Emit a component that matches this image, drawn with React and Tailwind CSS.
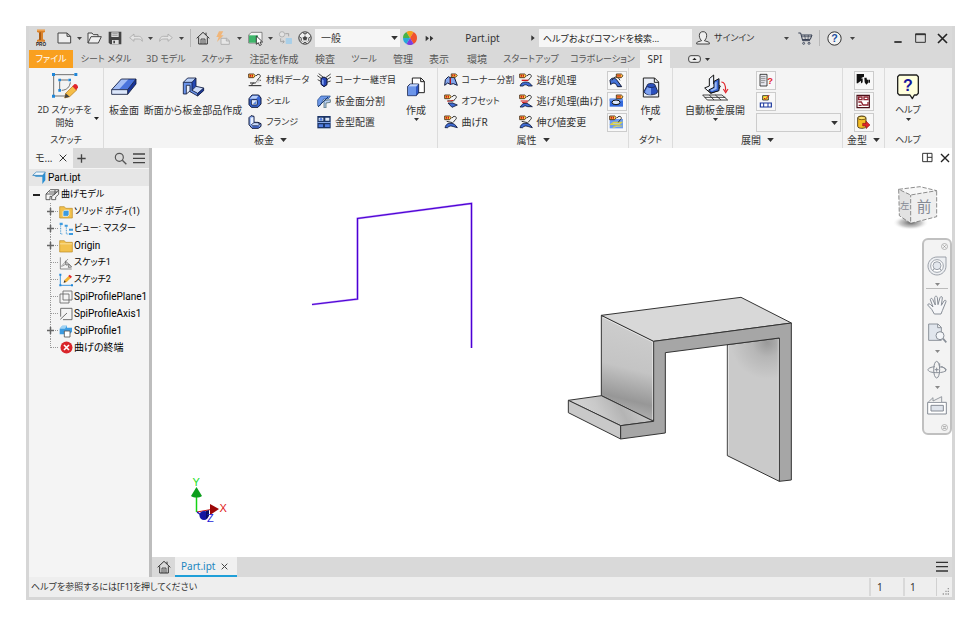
import React from "react";

const UI = "font-['Noto_Sans','Noto_Sans_CJK_JP',sans-serif]";

/* Katakana labels are set one size smaller than kanji and Latin ones. */
const sizeOf = (label) => (/[ァ-ヶ]/.test(label) ? "text-[9px]" : "text-[10px]");

/* Icons are drawn on a grid of three units per pixel. */
function Pic({ w, h, children, className = "" }) {
  return (
    <svg width={w} height={h} viewBox={`0 0 ${w * 3} ${h * 3}`} fill="none" className={`shrink-0 ${className}`} aria-hidden="true">
      {children}
    </svg>
  );
}

function Caret({ big = false, color = "#333" }) {
  return (
    <svg width={big ? 7 : 5} height={big ? 4 : 3} viewBox="0 0 10 6" aria-hidden="true" className="shrink-0">
      <path d="M0 0h10L5 6z" fill={color} />
    </svg>
  );
}

/* ---------- title bar icons ---------- */
const Logo = () => (
  <Pic w={14} h={18}>
    <path d="M9 2h24v7l-6 2v20l6 2v5H9v-5l6-2V11L9 9z" fill="#d9822b" />
    <path d="M15 11l6-2v24h-6z" fill="#a65a14" />
    <path d="M9 2h24v4H9z" fill="#f0a04b" />
    <text x="21" y="52" fontSize="14" fontWeight="700" textAnchor="middle" fill="#222" fontFamily="Liberation Sans">PRO</text>
  </Pic>
);
const NewFile = ({ c = "#444" }) => (
  <Pic w={15} h={12}>
    <path d="M3 3h27l11 10v20H3z M30 3v10h11" stroke={c} strokeWidth="3" fill="#eee" />
  </Pic>
);
const OpenFile = () => (
  <Pic w={15} h={12}>
    <path d="M3 33V3h12l4 5h14v6 M3 33l9-19h31l-9 19z" stroke="#444" strokeWidth="3" fill="#eee" strokeLinejoin="round" />
  </Pic>
);
const Save = () => (
  <Pic w={14} h={14}>
    <path d="M2 2h38v38H7l-5-5z" fill="#444" />
    <path d="M10 4h22v14H10z" fill="#ddd" />
    <path d="M13 8h16M13 13h16" stroke="#777" strokeWidth="2" />
    <path d="M12 27h20v12H12z" fill="#ddd" />
    <path d="M16 29h5v8h-5z" fill="#444" />
  </Pic>
);
const Undo = ({ flip = false }) => (
  <Pic w={14} h={10} className={flip ? "-scale-x-100" : ""}>
    <path d="M2 14L15 3v7h14c6 0 11 4 11 15-4-6-7-7-12-7H15v7z" stroke="#aaa" strokeWidth="2.5" fill="#e4e4e4" strokeLinejoin="round" />
  </Pic>
);
const Home = () => (
  <Pic w={14} h={14}>
    <path d="M2 22L21 4l19 18M8 19v20h26V19M30 5v7" stroke="#333" strokeWidth="3" />
    <path d="M15 39V24h12v15M21 26v12" stroke="#333" strokeWidth="2.5" />
  </Pic>
);
const Flash = () => (
  <Pic w={16} h={14}>
    <path d="M12 1h13l-7 12h8L6 33l5-15H4z" fill="#f0b67a" />
    <path d="M18 22h17l8 7v11H18z M34 22v8h9" stroke="#aaa" strokeWidth="2.5" fill="#e6e6e6" />
  </Pic>
);
const GreenBox = () => (
  <Pic w={15} h={15}>
    <path d="M2 12l8-8h32v24l-8 8H2z" fill="#f4f4f4" stroke="#555" strokeWidth="2" />
    <path d="M3 13h27v22H3z" fill="#3eb56a" />
    <path d="M25 15v25l6-5 4 9 5-3-4-8h8z" fill="#fff" stroke="#222" strokeWidth="2.5" />
  </Pic>
);
const LinkBoxes = () => (
  <Pic w={15} h={14}>
    <circle cx="12" cy="10" r="8" stroke="#aaa" strokeWidth="2.5" fill="#e2e2e2" />
    <path d="M22 8h10v8M8 22v10h10M14 28l5 4-5 5" stroke="#999" strokeWidth="2.5" />
    <rect x="23" y="21" width="19" height="18" rx="2" fill="#a9cfe8" />
  </Pic>
);
const Ball = () => (
  <Pic w={14} h={14}>
    <circle cx="21" cy="21" r="18.5" fill="#eee" stroke="#333" strokeWidth="3" />
    <path d="M21 15l7 5-3 8h-8l-3-8z" fill="#444" />
    <path d="M14 5l7 4 7-4M5 17l5 6-1 8M37 17l-5 6 1 8M15 38l6-5 6 5" stroke="#444" strokeWidth="3" />
    <path d="M21 14V9M29 20l4 2M26 29l3 4M16 29l-3 4M13 20l-4 2" stroke="#777" strokeWidth="2" />
  </Pic>
);
const Wheel = () => (
  <Pic w={14} h={14}>
    <path d="M21 21L10 3A21 21 0 0 1 32 3z" fill="#f6a01a" />
    <path d="M21 21L32 3a21 21 0 0 1 10 18z" fill="#f0522d" />
    <path d="M21 21h21a21 21 0 0 1-10 18z" fill="#f0522d" />
    <path d="M21 21l11 18a21 21 0 0 1-22 0z" fill="#7a3fe0" />
    <path d="M21 21L10 39A21 21 0 0 1 0 21z" fill="#28a9d9" />
    <path d="M21 21H0A21 21 0 0 1 10 3z" fill="#48b348" />
  </Pic>
);
const User = () => (
  <Pic w={14} h={14}>
    <path d="M21 2c8 0 11 5 11 12s-4 13-7 15l13 4c2 1 2 4 2 6H2c0-2 0-5 2-6l13-4c-3-2-7-8-7-15S13 2 21 2z" stroke="#444" strokeWidth="3" fill="#eee" />
  </Pic>
);
const Cart = () => (
  <Pic w={15} h={13}>
    <path d="M1 3h7l6 23h22M10 9h32l-5 13-24 1" stroke="#333c50" strokeWidth="3" />
    <path d="M12 14h28M20 9l2 13M31 9l-1 13" stroke="#333c50" strokeWidth="2" />
    <circle cx="17" cy="34" r="3" stroke="#333c50" strokeWidth="2.5" />
    <circle cx="33" cy="34" r="3" stroke="#333c50" strokeWidth="2.5" />
  </Pic>
);
const HelpCircle = () => (
  <Pic w={15} h={15}>
    <circle cx="22.5" cy="22.5" r="20" stroke="#333" strokeWidth="3" fill="#f4f4f4" />
    <text x="22.5" y="34" fontSize="32" fontWeight="700" textAnchor="middle" fill="#1d4f9e" fontFamily="Liberation Sans">?</text>
  </Pic>
);

/* ---------- ribbon icons ---------- */
const SketchStart = () => (
  <Pic w={27} h={27}>
    <path d="M10 8h60M8 12v58M10 72h34" stroke="#555" strokeWidth="2.5" />
    <path d="M29 24h22M26 28v26M32 55c16-1 24-10 26-24" stroke="#555" strokeWidth="2.5" />
    <g fill="#1f86d8">
      <path d="M3 3h9v9H3zM70 3h9v9h-9zM3 68h9v9H3zM22 20h8v8h-8zM52 20h8v8h-8zM22 51h8v8h-8z" />
    </g>
    <path d="M44 64L66 42l12 11-22 21-15 4z" fill="#f5bd48" stroke="#b8791a" strokeWidth="2" />
    <path d="M41 78l3-14 12 10z" fill="#444" />
    <path d="M64 43l7-7c5-1 11 5 10 11l-6 7z" fill="#e0262c" />
  </Pic>
);
const Slab = () => (
  <Pic w={28} h={20}>
    <path d="M5 38L34 6h44L53 38z" fill="#4a74dd" />
    <path d="M5 38L34 6h22L26 38z" fill="#a3bdf5" />
    <path d="M5 38h48v14H5z" fill="#dce7fb" />
    <path d="M53 38L78 6v15L53 52z" fill="#17349b" />
    <path d="M5 38L34 6h44v15L53 52H5zM5 38h48v14M53 38L78 6" stroke="#111a3c" strokeWidth="2.5" />
  </Pic>
);
const Profile = () => (
  <Pic w={23} h={20}>
    <path d="M4 16L17 3h25v25l23 5v8L47 57 24 44V25H13v26H4z" fill="#6b94ea" />
    <path d="M4 16L17 3h25L30 16z" fill="#b9d0f8" />
    <path d="M30 16L42 3v25L30 40z" fill="#2347b4" />
    <path d="M30 40l12-12 23 5-18 16z" fill="#cddcfb" />
    <path d="M47 49l18-16v8L47 57z" fill="#1e3a9a" />
    <path d="M13 25h11v17l-11 9z" fill="#e8effd" />
    <path d="M4 16L17 3h25v25l23 5v8L47 57 24 44V25H13v26H4zM4 16h26v24l17 9v8M30 16L42 3M30 40l12-12M47 49l18-16M13 51l11-9" stroke="#111a3c" strokeWidth="2.5" strokeLinejoin="round" />
  </Pic>
);
const CreatePart = () => (
  <Pic w={18} h={20}>
    <path d="M16 3h26l10 10v34H16z M41 3v11h11" fill="#fff" stroke="#222" strokeWidth="3" />
    <path d="M2 28l7-7h26v26l-7 9H2z" fill="#2f57c4" stroke="#111a3c" strokeWidth="2.5" />
    <path d="M3 29l7-7h24l-7 7z" fill="#c4d7fa" />
    <path d="M3 29h24v26H3z" fill="#6c95e9" />
  </Pic>
);
const DuctPart = () => (
  <Pic w={18} h={21}>
    <path d="M4 3h34l12 12v45H4z M37 3v13h13" fill="#e9edf5" stroke="#222" strokeWidth="3" />
    <path d="M15 26c0-9 25-9 25 0l7 17c0 14-41 14-41 0z" fill="#2b50bd" stroke="#111a3c" strokeWidth="2.5" />
    <path d="M16 31L9 44c1 8 13 9 18 9V33z" fill="#7da0ee" />
    <path d="M16 27c3 6 20 6 24 0" stroke="#111a3c" strokeWidth="2" />
  </Pic>
);
const Unfold = () => (
  <Pic w={27} h={27}>
    <path d="M22 14L35 3v27l20 6-7 14-22 8L8 42l14-6z" fill="#eef3fc" stroke="#111" strokeWidth="3" strokeLinejoin="round" />
    <path d="M36 22l15-8v36L27 57l-7-9 16-8z" fill="#3a68d6" stroke="#111" strokeWidth="3" />
    <path d="M38 26l6-3v22l-14 6-5-3 13-6z" fill="#9dbbf5" />
    <path d="M2 63h58l17 15H16zM22 63l14 15M40 63l17 15M8 70h62" fill="#fff" stroke="#222" strokeWidth="2.5" />
    <path d="M58 24c9 0 13 6 13 26M64 45l7 11 7-11" stroke="#e0262c" strokeWidth="3.500" />
  </Pic>
);
const HelpNote = () => (
  <Pic w={22} h={26}>
    <path d="M7 3h52l5 5v50l-5 5H52l-6 11-7-11H7l-5-5V8z" fill="#ffffdd" stroke="#222" strokeWidth="4" strokeLinejoin="round" />
    <text x="33" y="50" fontSize="48" fontWeight="700" textAnchor="middle" fill="#16169b" fontFamily="Liberation Sans">?</text>
  </Pic>
);

const Tag = ({ x = 0 }) => (
  <g>
    <path d={`M${x + 2} 3h15l5 5-5 6H${x + 2}z`} fill="#ffcf4a" stroke="#40200c" strokeWidth="2.5" />
    <path d={`M${x + 5} 8h10`} stroke="#d01818" strokeWidth="6" strokeDasharray="4 2" />
  </g>
);
const Hook = () => <path d="M24 9c4-8 14-5 13 1-1 5-7 6-9 12" stroke="#333" strokeWidth="3" />;

const Material = () => (
  <Pic w={14} h={14}><Tag /><Hook /><path d="M2 38h38M6 30h17l7-8h9M10 36l7-6" stroke="#222" strokeWidth="3" /><path d="M23 30l7-8h8l-6 8z" fill="#ddd" /></Pic>
);
const Shell = () => (
  <Pic w={14} h={14}>
    <path d="M3 14L12 3h20l7 9v18l-9 10H10l-7-8z" fill="#3a66d2" stroke="#111a3c" strokeWidth="3" />
    <path d="M5 14l8-9h18l-6 9z" fill="#b9cff8" />
    <rect x="10" y="17" width="18" height="16" rx="3" fill="#dce7fb" stroke="#111a3c" strokeWidth="2.5" />
    <path d="M15 30h10V20z" fill="#5b86e0" />
  </Pic>
);
const Flange = () => (
  <Pic w={14} h={14}>
    <path d="M3 8l6-6 9 2v18h12l9 4v8l-8 6H12L3 29z" fill="#88aaf0" stroke="#111a3c" strokeWidth="3" />
    <path d="M8 9l8-3v17l-6 6-2-3z" fill="#eaf1ff" /><path d="M13 34h20v4H13z" fill="#2347af" /><path d="M10 29l8-6h10l8 4-7 5H14z" fill="#c9dafa" stroke="#111a3c" strokeWidth="2" />
  </Pic>
);
const Seam = () => (
  <Pic w={14} h={14}>
    <path d="M1 8l13 9M5 2l13 10M41 3L26 14M42 12L28 21M2 20l11 6M41 24l-12 4" stroke="#222" strokeWidth="2.500" />
    <path d="M12 16l9-4 9 5v18l-9 6-9-7z" fill="#2746b8" stroke="#0b102c" strokeWidth="3" />
    <path d="M15 19l5 3v14l-5-4z" fill="#86a6f0" />
  </Pic>
);
const FaceSplit = () => (
  <Pic w={14} h={13}>
    <path d="M2 15L12 3h28l-6 9H20L9 32H2z" fill="#6d98e8" stroke="#1b4384" strokeWidth="2" />
    <path d="M21 17l19-3v8l-13 2v15h-6z" fill="#b9d0f5" stroke="#355" strokeWidth="2" />
    <path d="M3 36l30-30" stroke="#16386e" strokeWidth="3" />
  </Pic>
);
const DieLayout = () => (
  <Pic w={14} h={14}>
    <path d="M1 3h40v37H1z" fill="#1b3467" />
    <path d="M5 8h14v9H5zM25 8h12v9H25z" fill="#dfe9f7" /><path d="M1 21h40v3H1z" fill="#89a9e8" />
    <path d="M5 28h13v8H5zM24 28h14v8H24z" fill="#4f7be0" /><circle cx="12" cy="13" r="4" fill="#4f7be0" />
  </Pic>
);
const BendBlade = ({ d }) => <path d={d} fill="#3e6bd4" stroke="#0e1838" strokeWidth="2.5" />;
const CornerSplit = () => (
  <Pic w={14} h={14}>
    <path d="M2 37l2-17 9-9 6 3v20L11 30zM19 14l12-1 9 24-12-5-9 2z" fill="#83a6ee" stroke="#111a3c" strokeWidth="3" strokeLinejoin="round" />
    <path d="M19 15v18" stroke="#d01818" strokeWidth="3" /><g transform="translate(20 0) scale(.9)"><Tag /></g>
  </Pic>
);
const Offset = () => (
  <Pic w={14} h={14}><Tag /><Hook /><path d="M10 22l18-3" stroke="#d01818" strokeWidth="3" /><BendBlade d="M12 27h14l14 6-16 7z" /><path d="M10 19l17 5" stroke="#333" strokeWidth="2" /></Pic>
);
const BendR = () => (
  <Pic w={14} h={14}><Tag /><Hook /><path d="M8 19l18 4" stroke="#333" strokeWidth="3" /><BendBlade d="M3 38c3-11 9-14 18-13 9 0 14 5 19 13l-11-3c-7-3-14-3-18 3z" /></Pic>
);
const Relief = () => (
  <Pic w={14} h={14}><Tag /><Hook /><path d="M8 22h20" stroke="#d01818" strokeWidth="4" /><BendBlade d="M3 39c3-9 9-12 17-12 9 0 14 4 20 12H28c-6-5-11-5-16 0z" /></Pic>
);
const ReliefBend = () => (
  <Pic w={14} h={14}><Tag /><Hook /><path d="M5 21h22M9 26l17-2" stroke="#d01818" strokeWidth="3" /><BendBlade d="M3 39l9-10 12-1 16 10H26l-8-3-6 4z" /></Pic>
);
const FrameBend = () => (
  <Pic w={15} h={15}>
    <path d="M3 22c6-10 16-8 22 1l13 18H25c-3-11-12-14-20-6z" fill="#4472d8" stroke="#0e1838" strokeWidth="3" />
    <path d="M9 22C16 9 26 8 33 22" stroke="#333" strokeWidth="3" /><g transform="translate(20 0)"><Tag /></g>
  </Pic>
);
const FrameHole = () => (
  <Pic w={15} h={15}>
    <path d="M2 14h40v24H2z" fill="#3369dc" /><path d="M2 14h40v7H2z" fill="#6694ee" />
    <ellipse cx="21" cy="25" rx="12" ry="7" fill="#dce7fb" stroke="#111" strokeWidth="3" /><g transform="translate(20 0)"><Tag /></g>
  </Pic>
);
const FrameSlots = () => (
  <Pic w={15} h={15}>
    <path d="M2 12h40v28H2z" fill="#6d9bf0" /><path d="M6 28l8-6h24l-7 6zM12 38l8-5h20" stroke="#d8d048" strokeWidth="3.5" fill="#a5c3f8" />
    <Tag /><Hook />
  </Pic>
);
const Question = () => (
  <Pic w={14} h={15}>
    <path d="M3 4h21v35H3z" fill="#e8eaf0" stroke="#222" strokeWidth="2.5" /><path d="M7 11h13M7 17h13M7 23h13M7 29h9" stroke="#444" strokeWidth="2.5" strokeDasharray="4 2" />
    <text x="33" y="34" fontSize="28" fontWeight="700" textAnchor="middle" fill="#e0262c" fontFamily="Liberation Sans">?</text>
  </Pic>
);
const FlatTag = () => (
  <Pic w={14} h={15}>
    <path d="M11 5h17v13H11z" fill="#ffe838" stroke="#222" strokeWidth="2.5" /><path d="M15 12l4 4L31 3" stroke="#d01818" strokeWidth="3" />
    <path d="M4 27h33v12H4z" fill="#fff" stroke="#17349b" strokeWidth="3.5" /><path d="M14 27v12M27 27v12" stroke="#17349b" strokeWidth="3" />
  </Pic>
);
const Punch = () => (
  <Pic w={15} h={15}>
    <path d="M2 3h22v8l-7 3v9L8 31H2zM14 20l6-4v12l-6 4z" fill="#111" />
    <path d="M6 30l9-7v14H6z" fill="#eee" /><path d="M25 14h7v5l4 2v9l-5 5-5-7zM37 20h5v9h-5z" fill="#111" />
  </Pic>
);
const DieBox = () => (
  <Pic w={15} h={15}>
    <path d="M3 4h37v37H3z" fill="#fff" stroke="#4b1018" strokeWidth="3.5" />
    <path d="M8 9h10v8H8zM24 9h12v8H24zM7 24h9l5 9h15v-9M8 34h9" stroke="#8f2331" strokeWidth="4" />
  </Pic>
);
const DieExport = () => (
  <Pic w={15} h={15}>
    <path d="M5 9c0-8 25-8 25 0v25c0 8-25 8-25 0z" fill="#f5bd24" stroke="#3c2a08" strokeWidth="2.5" /><ellipse cx="17.500" cy="9" rx="12" ry="5" fill="#ffe26e" stroke="#3c2a08" strokeWidth="2" />
    <path d="M20 25h10v-7l12 12-12 11v-8H20z" fill="#e0262c" stroke="#7a1010" strokeWidth="1.500" />
  </Pic>
);

/* ---------- parts ---------- */
function Tool({ label, className, children }) {
  return (
    <button type="button" aria-label={label} className={`flex h-5 shrink-0 items-center justify-center ${className}`}>
      {children}
    </button>
  );
}
const Drop = ({ label }) => (
  <Tool label={label} className="w-[9px]"><Caret color="#444" /></Tool>
);

function Group({ title, more, className, children }) {
  return (
    <section className={`flex shrink-0 flex-col border-r border-[#dcdcdc] ${className}`}>
      <div className="flex h-16 justify-center">{children}</div>
      <div className={`flex h-4 items-center justify-center gap-[6px] whitespace-nowrap ${sizeOf(title)}`}>
        {title}
        {more && <Caret big />}
      </div>
    </section>
  );
}
function Big({ icon, label, caret, className }) {
  return (
    <button type="button" className={`flex shrink-0 flex-col items-center whitespace-nowrap pt-1 ${className}`}>
      <span className="flex h-[30px] items-center justify-center">{icon}</span>
      <span className={`leading-4 ${sizeOf(label)}`}>{label}</span>
      {caret && <Caret color="#333" />}
    </button>
  );
}
function Column({ items, className }) {
  return (
    <div className={`flex shrink-0 flex-col gap-px pt-[2px] ${className}`}>
      {items.map(([Icon, label]) => (
        <button key={label} type="button" className={`flex h-5 items-center gap-1 whitespace-nowrap ${sizeOf(label)}`}>
          <Icon />
          {label}
        </button>
      ))}
    </div>
  );
}
const Framed = ({ label, icon }) => (
  <button type="button" aria-label={label} className="flex h-[19px] w-5 items-center justify-center border border-[#ccc] bg-[#f8f8f8]">{icon}</button>
);

const tabs = [
  ["シート メタル", "w-[66px]"], ["3D モデル", "w-[54px]"], ["スケッチ", "w-12"], ["注記を作成", "w-[66px]"],
  ["検査", "w-9"], ["ツール", "w-[42px]"], ["管理", "w-9"], ["表示", "w-9"], ["環境", "w-10"],
  ["スタートアップ", "w-[68px]"], ["コラボレーション", "w-[75px]"],
];

/* ---------- model tree ---------- */
const FolderBody = () => (
  <Pic w={14} h={14}><path d="M2 5h14l4 5h20v29H2z" fill="#f2c14d" stroke="#b98a22" strokeWidth="2" /><path d="M12 20l4-4h14v14l-4 4H12z" fill="#3c9be0" stroke="#fff" strokeWidth="2" /></Pic>
);
const ViewTree = () => (
  <Pic w={14} h={14}><path d="M5 8v28h6M5 8h6M22 14v22h8M20 12h6" stroke="#2d8cd0" strokeWidth="2.5" strokeDasharray="3 2" /><path d="M2 2h9v7H2zM17 8h9v6h-9zM30 20h12v6H30zM30 33h12v6H30z" fill="#3c9be0" /></Pic>
);
const Folder = () => (
  <Pic w={14} h={14}><path d="M2 5h14l4 5h20v29H2z" fill="#f2c14d" stroke="#b98a22" strokeWidth="2" /><path d="M3 13h36v3H3z" fill="#fae09a" /></Pic>
);
const SketchGray = () => (
  <Pic w={14} h={14}>
    <path d="M4 4v35h34" stroke="#777" strokeWidth="2.5" />
    <path d="M5 33L27 9M10 31l12-8" stroke="#888" strokeWidth="2.500" />
    <path d="M19 15l12 11-10 1zM31 25l7 8-10 1z" stroke="#777" strokeWidth="3" />
  </Pic>
);
const SketchColor = () => (
  <Pic w={14} h={14}><path d="M4 6v31h34" stroke="#1f86d8" strokeWidth="2.5" /><path d="M1 2h6v6H1zM1 34h6v6H1zM36 34h6v6h-6z" fill="#1f86d8" /><path d="M14 29l3-9L30 8l6 6-13 13z" fill="#f2b233" /><path d="M28 9l4-4 7 6-4 5z" fill="#e0262c" /><path d="M14 29l2-7 5 5z" fill="#333" /></Pic>
);
const Plane = () => (
  <Pic w={14} h={14}><path d="M12 3h27v27H12zM3 12h27v27H3z" stroke="#666" strokeWidth="2.5" /></Pic>
);
const Axis = () => (
  <Pic w={14} h={14}><path d="M12 38H39V4H5v25M4 37L24 18" stroke="#555" strokeWidth="2.5" /></Pic>
);
const SpiShape = () => (
  <Pic w={14} h={14}><path d="M2 14l8-9h14v6h15v12l-7 8H2z" fill="#3c9be0" /><path d="M2 14l8-9h14l-6 9z" fill="#9fd3f5" /><path d="M16 21h17v18H16z" fill="#fff" stroke="#555" strokeWidth="2.5" /></Pic>
);
const EndMark = () => (
  <Pic w={13} h={13}><circle cx="19.500" cy="19.500" r="18" fill="#d9252b" /><path d="M12 12l15 15M27 12L12 27" stroke="#fff" strokeWidth="5" /></Pic>
);
const nodes = [
  [FolderBody, "ソリッド ボディ(1)", true], [ViewTree, "ビュー: マスター", true], [Folder, "Origin", true],
  [SketchGray, "スケッチ1"], [SketchColor, "スケッチ2"], [Plane, "SpiProfilePlane1"], [Axis, "SpiProfileAxis1"],
  [SpiShape, "SpiProfile1", true], [EndMark, "曲げの終端"],
];

function Browser() {
  return (
    <aside className="flex w-[120px] shrink-0 flex-col bg-[#f4f4f4]">
      <div className="flex h-5 bg-[#d9d9d9]">
        <div className="flex w-11 items-center justify-between bg-[#f4f4f4] px-[6px]">
          モ...
          <button type="button" aria-label="閉じる"><Pic w={8} h={8}><path d="M2 2l20 20M22 2L2 22" stroke="#333" strokeWidth="3" /></Pic></button>
        </div>
        <div className="flex flex-1 items-center justify-between px-1">
          <button type="button" aria-label="追加"><Pic w={9} h={9}><path d="M13.500 1v25M1 13.500h25" stroke="#444" strokeWidth="4" /></Pic></button>
          <span className="flex items-center gap-[6px]">
            <button type="button" aria-label="検索"><Pic w={13} h={13}><circle cx="16" cy="16" r="12" stroke="#555" strokeWidth="3.500" /><path d="M25 25l12 12" stroke="#555" strokeWidth="4" /></Pic></button>
            <button type="button" aria-label="メニュー"><Pic w={12} h={11}><path d="M0 3h36M0 16h36M0 29h36" stroke="#444" strokeWidth="4" /></Pic></button>
          </span>
        </div>
      </div>
      <div className="pt-px font-['Roboto','Noto_Sans_CJK_JP',sans-serif] text-black">
        <div className="flex h-[17px] items-center gap-[2px] bg-[#e6e6e6] pl-[3px]">
          <Pic w={14} h={14}><path d="M2 13L13 3h27v25l-9 11V17H12z" fill="#2a8fd3" /><path d="M2 13L13 3h27l-8 10z" fill="#f4f9fd" stroke="#3b82b5" strokeWidth="2" /></Pic>
          Part.ipt
        </div>
        <div className="flex h-[17px] items-center whitespace-nowrap pl-1 text-[9px]">
          <span className="mr-[5px] h-[2px] w-[7px] bg-[#222]" />
          <Pic w={15} h={13} className="mr-px"><path d="M3 18L16 5h25v14l-9 8v8H20V25h-5v10H3zM3 18h27V6M30 18l11-12M12 12h25M20 25l10-7" stroke="#444" strokeWidth="2.500" /></Pic>
          曲げモデル
        </div>
        <ul>
          {nodes.map(([Icon, label, plus], i) => (
            <li key={label} className={`flex h-[17px] items-center whitespace-nowrap pl-[17px] ${sizeOf(label)}`}>
              <svg width="12" height="17" className="mr-px shrink-0" aria-hidden="true">
                <path d={i === nodes.length - 1 ? "M4.500 0V9" : "M4.500 0V17"} stroke="#999" strokeDasharray="1 1" />
                <path d="M5 8.500H12" stroke="#999" strokeDasharray="1 1" />
                {plus && <path d="M1 8.500h7M4.500 5v7" stroke="#666" strokeWidth="1.500" />}
              </svg>
              <span className="mr-px flex w-[14px] justify-center"><Icon /></span>
              {label}
            </li>
          ))}
        </ul>
      </div>
    </aside>
  );
}

/* ---------- model view ---------- */
function Scene() {
  return (
    <svg viewBox="152 148 800 409" preserveAspectRatio="xMidYMid meet" className="h-full w-full" role="img" aria-label="板金モデル">
      <defs>
        <linearGradient id="wall" gradientUnits="userSpaceOnUse" x1="240" y1="110" x2="170" y2="390">
          <stop offset="0" stopColor="#cecece" /><stop offset="0.500" stopColor="#c4c4c4" /><stop offset="0.820" stopColor="#979797" /><stop offset="1" stopColor="#b4b4b4" />
        </linearGradient>
        <linearGradient id="step" x1="0" y1="0.500" x2="1" y2="0.300">
          <stop offset="0" stopColor="#d8d8d8" /><stop offset="0.350" stopColor="#c9c9c9" /><stop offset="0.600" stopColor="#b4b4b4" /><stop offset="1" stopColor="#d2d2d2" />
        </linearGradient>
        <radialGradient id="shade" gradientUnits="userSpaceOnUse" cx="622" cy="172" r="110">
          <stop offset="0" stopColor="#999" /><stop offset="0.400" stopColor="#b6b6b6" /><stop offset="1" stopColor="#cacaca" />
        </radialGradient>
      </defs>
      <path d="M312 304.500L357.500 299V218.500L471.500 203.500V348" fill="none" stroke="#b98cf5" strokeWidth="2" />
      <path d="M312 304.500L357.500 299V218.500L471.500 203.500V348" fill="none" stroke="#4a00d4" strokeWidth="1.200" />
      <g transform="translate(560 285) scale(.33333)" stroke="#333" strokeWidth="3" strokeLinejoin="round">
        <path d="M502 179L658 159V589L502 512z" fill="url(#shade)" />
        <path d="M124 91L281 169V409L124 332z" fill="url(#wall)" />
        <path d="M25 346L124 332L281 409L182 422z" fill="url(#step)" />
        <path d="M25 346L182 422V462L25 383z" fill="#c9c9c9" />
        <path d="M124 91L543 37L694 114L281 169z" fill="#d8d8d8" />
        <path d="M281 169L694 114V585L658 589V159L316 203V444L182 462V422L281 409z" fill="#a6a6a6" />
        <path d="M129 97L278 171V403M505 182V509M655 162V584" fill="none" stroke="#f2f2f2" strokeWidth="2" />
      </g>
      <g fontFamily="Liberation Sans" fontSize="11">
        <path d="M196.500 512V496" stroke="#14d314" strokeWidth="1.500" /><path d="M191 496l5.500-9 5.500 9c-3 2-8 2-11 0z" fill="#0c9e1c" />
        <path d="M197 512l14-2.500" stroke="#c01414" /><path d="M210 504l9 5-9 6z" fill="#9c0808" />
        <path d="M197 512l4 3" stroke="#1a1ab0" strokeWidth="1.500" /><circle cx="204" cy="515.500" r="4.500" fill="#1515a0" /><path d="M206 511l3-1 0 6-3 3z" fill="#0c0c60" />
        <text x="192.500" y="486" fill="#22e022">Y</text><text x="219.500" y="512" fill="#e01818">X</text><text x="207" y="522" fill="#2424d8">Z</text>
      </g>
    </svg>
  );
}

function ViewCube() {
  return (
    <Pic w={50} h={50}>
      <defs><radialGradient id="cubeShadow"><stop offset="0" stopColor="#666" /><stop offset="0.600" stopColor="#aaa" stopOpacity="0.600" /><stop offset="1" stopColor="#fff" stopOpacity="0" /></radialGradient></defs>
      <ellipse cx="56" cy="116" rx="54" ry="22" fill="url(#cubeShadow)" />
      <path d="M20 16L84 8l50 12-78 13z" fill="#f8f8f8" /><path d="M20 16l36 17v85L22 95z" fill="#e2e2e2" /><path d="M56 33l78-13v78l-78 20z" fill="#efefef" />
      <path d="M20 16L84 8l50 12-78 13zM20 16l2 79 34 23V33M56 118l78-20V20" stroke="#777" strokeWidth="2.500" strokeDasharray="13 5" />
      <text x="96" y="84" fontSize="44" textAnchor="middle" fill="#858a94" fontFamily="Noto Sans CJK JP">前</text>
      <text x="38" y="76" fontSize="28" textAnchor="middle" fill="#858a94" fontFamily="Noto Sans CJK JP">左</text>
    </Pic>
  );
}

const NavButton = ({ label, children, className }) => (
  <button type="button" aria-label={label} className={`flex w-full shrink-0 items-center justify-center ${className}`}>{children}</button>
);
function NavBar() {
  return (
    <div className="flex h-[197px] w-[30px] flex-col items-center rounded-md border-2 border-[#c0c0c0] bg-[#f3f3f3]">
      <button type="button" aria-label="閉じる" className="mr-[2px] flex h-3 items-center self-end">
        <Pic w={7} h={7}><circle cx="10.500" cy="10.500" r="9" stroke="#999" strokeWidth="2" /><path d="M7 7l7 7M14 7l-7 7" stroke="#888" strokeWidth="2" /></Pic>
      </button>
      <NavButton label="ステアリング ホイール" className="h-7"><Pic w={20} h={20}><path d="M30 3h27v27c0 15-12 27-27 27S3 45 3 30 15 3 30 3z" stroke="#8c929b" strokeWidth="2.500" fill="#edeff2" /><circle cx="30" cy="30" r="19" stroke="#8c929b" strokeWidth="2.500" fill="#fff" /><circle cx="30" cy="29" r="12" stroke="#8c929b" strokeWidth="2.500" fill="#e3e7ed" /><path d="M17 44l5-7M43 44l-5-7" stroke="#8c929b" strokeWidth="2.500" /></Pic></NavButton>
      <NavButton label="ホイールのメニュー" className="h-2"><Caret color="#888" /></NavButton>
      <div className="h-px w-[22px] bg-[#bbb]" />
      <NavButton label="画面移動" className="h-8"><Pic w={20} h={20}><path d="M22 57L14 43 2 30c1-5 6-4 9-1l7 7L10 14c1-5 5-5 7-1l8 17L23 8c1-6 7-6 8 0l2 21L39 8c2-5 7-4 7 1l-3 22 8-13c3-4 7-2 6 2L46 47l-4 10z" fill="#f6f7f9" stroke="#888e97" strokeWidth="3" strokeLinejoin="round" /></Pic></NavButton>
      <NavButton label="ズーム" className="h-6"><Pic w={20} h={20}><path d="M5 3h28l10 10v39H5zM32 3v11h11" fill="#e1e6ed" stroke="#8c929b" strokeWidth="3" /><circle cx="39" cy="38" r="12" fill="#f4f6f9" stroke="#888e97" strokeWidth="3" /><path d="M48 47l10 11" stroke="#888e97" strokeWidth="5" /></Pic></NavButton>
      <NavButton label="ズームのメニュー" className="h-3"><Caret color="#888" /></NavButton>
      <NavButton label="オービット" className="h-6"><Pic w={20} h={19}><ellipse cx="29" cy="29" rx="9" ry="25" stroke="#888e97" strokeWidth="3" /><path d="M24 20C12 21 3 25 3 29c0 6 12 9 27 9s27-3 27-9c0-4-7-7-15-9" stroke="#888e97" strokeWidth="3" /><path d="M38 10v11h10M50 24l7 5-4 7M23 29h12M29 23v12" stroke="#888e97" strokeWidth="3" /></Pic></NavButton>
      <NavButton label="オービットのメニュー" className="h-3"><Caret color="#888" /></NavButton>
      <NavButton label="ビュー正面" className="h-6"><Pic w={20} h={20}><path d="M2 22h56v35H2z" fill="#fff" stroke="#858b94" strokeWidth="3" /><path d="M12 31h37v17H12z" fill="#dfe4ec" stroke="#858b94" strokeWidth="3" /><path d="M4 21l14-13v10L44 5v16" stroke="#858b94" strokeWidth="2.500" fill="#eee" /></Pic></NavButton>
      <button type="button" aria-label="オプション" className="mr-[2px] mt-auto flex h-3 items-center self-end">
        <Pic w={7} h={7}><circle cx="10.500" cy="10.500" r="9" stroke="#999" strokeWidth="2" /><path d="M6 8h9M6 13h9" stroke="#888" strokeWidth="2" /></Pic>
      </button>
    </div>
  );
}

function TitleBar() {
  return (
    <header className="flex h-6 shrink-0 items-center">
      <Tool label="Inventor" className="w-6"><Logo /></Tool>
      <Tool label="新規作成" className="w-[22px]"><NewFile /></Tool>
      <Drop label="新規作成のメニュー" />
      <Tool label="開く" className="w-5"><OpenFile /></Tool>
      <Tool label="保存" className="w-[22px]"><Save /></Tool>
      <Tool label="元に戻す" className="w-5"><Undo /></Tool>
      <Drop label="元に戻すのメニュー" />
      <Tool label="やり直し" className="w-[22px]"><Undo flip /></Tool>
      <Drop label="やり直しのメニュー" />
      <span className="mx-1 h-[18px] w-px bg-[#b8b8b8]" />
      <Tool label="ホーム" className="w-4"><Home /></Tool>
      <Tool label="更新" className="w-6"><Flash /></Tool>
      <Drop label="更新のメニュー" />
      <Tool label="選択" className="w-[22px]"><GreenBox /></Tool>
      <Drop label="選択のメニュー" />
      <Tool label="リンク" className="w-5"><LinkBoxes /></Tool>
      <Tool label="マテリアル" className="w-5"><Ball /></Tool>
      <div className="relative h-[18px] w-[85px] shrink-0">
        <select aria-label="外観" className="h-full w-full appearance-none bg-[#f6f6f6] pl-[6px] leading-none outline-none"><option>一般</option></select>
        <span className="pointer-events-none absolute right-[2px] top-[7px] flex"><Caret big /></span>
      </div>
      <Tool label="外観を調整" className="w-5"><Wheel /></Tool>
      <Tool label="その他" className="w-[18px]"><Pic w={9} h={7}><path d="M2 2l10 8-10 9zM15 2l10 8-10 9z" fill="#333" /></Pic></Tool>
      <span className="w-[89px] shrink-0 text-center">Part.ipt</span>
      <Tool label="検索を展開" className="w-3"><Pic w={4} h={6}><path d="M1 1l10 8-10 8z" fill="#333" /></Pic></Tool>
      <input aria-label="検索" placeholder="ヘルプおよびコマンドを検索..." className="h-[18px] w-[153px] shrink-0 bg-[#f6f6f6] px-1 text-[9px] outline-none placeholder:text-[#222]" />
      <button type="button" className="flex flex-1 items-center gap-1 whitespace-nowrap pl-1 text-[9px]"><User />サインイン</button>
      <Drop label="サインインのメニュー" />
      <Tool label="ストア" className="w-7"><Cart /></Tool>
      <span className="h-4 w-px bg-[#b8b8b8]" />
      <Tool label="ヘルプ" className="w-7"><HelpCircle /></Tool>
      <Drop label="ヘルプのメニュー" />
      <Tool label="最小化" className="ml-[31px] w-5"><Pic w={8} h={12}><path d="M1 30h22" stroke="#222" strokeWidth="5" /></Pic></Tool>
      <Tool label="最大化" className="w-6"><Pic w={11} h={10}><path d="M2 3h29v25H2z" stroke="#333" strokeWidth="3" /><path d="M1 4h31" stroke="#333" strokeWidth="5" /></Pic></Tool>
      <Tool label="閉じる" className="w-5"><Pic w={11} h={11}><path d="M3 3l27 27M30 3L3 30" stroke="#222" strokeWidth="5" /></Pic></Tool>
    </header>
  );
}

function Ribbon() {
  return (
    <div className="flex h-20 shrink-0 bg-[#f4f4f4]">
      <Group title="スケッチ" className="w-[75px]">
        <button type="button" className="flex w-full items-end justify-center gap-[2px]">
          <span className="flex h-full flex-col items-center pl-1 pt-1">
            <SketchStart />
            <span className="mt-1 whitespace-nowrap text-center text-[9px] leading-[13px]">2D スケッチを<br />開始</span>
          </span>
          <span className="mb-3"><Caret color="#222" /></span>
        </button>
      </Group>
      <Group title="板金" more className="w-[334px]">
        <Big icon={<Slab />} label="板金面" className="w-10" />
        <Big icon={<Profile />} label="断面から板金部品作成" className="w-[98px]" />
        <Column className="w-[75px] pl-[6px]" items={[[Material, "材料データ"], [Shell, "シェル"], [Flange, "フランジ"]]} />
        <Column className="w-[78px]" items={[[Seam, "コーナー継ぎ目"], [FaceSplit, "板金面分割"], [DieLayout, "金型配置"]]} />
        <Big icon={<CreatePart />} label="作成" caret className="w-[42px]" />
      </Group>
      <Group title="属性" more className="w-[191px]">
        <Column className="w-[79px] pl-1" items={[[CornerSplit, "コーナー分割"], [Offset, "オフセット"], [BendR, "曲げR"]]} />
        <Column className="w-[88px]" items={[[Relief, "逃げ処理"], [ReliefBend, "逃げ処理(曲げ)"], [BendR, "伸び値変更"]]} />
        <div className="flex flex-col gap-[2px] pt-[3px]">
          <Framed label="曲げ属性" icon={<FrameBend />} /><Framed label="穴属性" icon={<FrameHole />} /><Framed label="属性一覧" icon={<FrameSlots />} />
        </div>
      </Group>
      <Group title="ダクト" className="w-11"><Big icon={<DuctPart />} label="作成" caret className="w-10" /></Group>
      <Group title="展開" more className="w-[170px]">
        <Big icon={<Unfold />} label="自動板金展開" caret className="w-[82px]" />
        <div className="flex flex-col gap-[2px] pt-[3px]">
          <Framed label="展開情報" icon={<Question />} /><Framed label="展開属性" icon={<FlatTag />} />
          <div className="relative h-[19px] w-[85px]">
            <select aria-label="展開" className="h-full w-full appearance-none border border-[#ccc] bg-[#f4f4f4] outline-none"><option /></select>
            <span className="pointer-events-none absolute right-[3px] top-2 flex"><Caret big /></span>
          </div>
        </div>
      </Group>
      <Group title="金型" more className="w-[42px]">
        <div className="flex flex-col gap-[2px] pt-[3px]">
          <Framed label="パンチ" icon={<Punch />} /><Framed label="金型編集" icon={<DieBox />} /><Framed label="金型出力" icon={<DieExport />} />
        </div>
      </Group>
      <section className="flex w-[46px] flex-col items-center">
        <div className="h-16"><Big icon={<HelpNote />} label="ヘルプ" caret className="w-10" /></div>
        <div className="flex h-4 items-center text-[9px]">ヘルプ</div>
      </section>
    </div>
  );
}

export default function App() {
  return (
    <div className="h-screen bg-white py-[26px] pl-[26px] pr-[25px]">
      <div className={`flex h-full flex-col overflow-hidden border-x-[3px] border-b-[3px] border-[#d6d6d6] bg-[#d9d9d9] text-[10px] text-[#333] [font-feature-settings:'palt'] ${UI}`}>
        <TitleBar />
        <nav className="flex h-[18px] shrink-0 items-stretch whitespace-nowrap text-[#555]">
          <button type="button" className="w-11 bg-[#f9a01f] text-[9px] text-white">ファイル</button>
          {tabs.map(([t, w]) => (
            <button key={t} type="button" className={`shrink-0 text-center ${sizeOf(t)} ${w}`}>{t}</button>
          ))}
          <button type="button" className="w-[30px] bg-[#f4f4f4] text-[#333]">SPI</button>
          <button type="button" aria-label="リボン表示" className="ml-[18px] flex items-center gap-1">
            <Pic w={13} h={8}><rect x="2" y="2" width="35" height="20" rx="7" stroke="#444" strokeWidth="3" fill="#eee" /><path d="M13 15l6.500-7 6.500 7z" fill="#222" /></Pic>
            <Caret />
          </button>
        </nav>
        <Ribbon />
        <div className="flex min-h-0 flex-1">
          <Browser />
          <div className="w-[3px] shrink-0 bg-[#bdbdbd]" />
          <main className="flex min-w-0 flex-1 flex-col bg-white">
            <div className="relative min-h-0 flex-1">
              <Scene />
              <div className="absolute right-[2px] top-1 flex items-center gap-[7px]">
                <button type="button" aria-label="タイル表示"><Pic w={11} h={11}><path d="M2 4h28v25H2zM16 4v25M16 16h14" stroke="#333" strokeWidth="3" /></Pic></button>
                <button type="button" aria-label="閉じる"><Pic w={10} h={10}><path d="M3 3l24 24M27 3L3 27" stroke="#222" strokeWidth="4" /></Pic></button>
              </div>
              <div className="absolute right-[10px] top-[36px]"><ViewCube /></div>
              <div className="absolute right-0 top-[90px]"><NavBar /></div>
            </div>
            <div className="flex h-5 shrink-0 items-center bg-[#d9d9d9]">
              <Tool label="ホーム" className="w-[23px]"><Home /></Tool>
              <div className="flex h-full w-[62px] items-center gap-[6px] border-b-2 border-[#1f9fd8] bg-[#f0f0f0] pl-[6px] text-[#1b86c0]">
                Part.ipt
                <button type="button" aria-label="閉じる"><Pic w={7} h={7}><path d="M2 2l17 17M19 2L2 19" stroke="#444" strokeWidth="3" /></Pic></button>
              </div>
              <button type="button" aria-label="ドキュメント メニュー" className="ml-auto mr-1"><Pic w={12} h={12}><path d="M0 4h36M0 17h36M0 30h36" stroke="#333" strokeWidth="4" /></Pic></button>
            </div>
          </main>
        </div>
        <footer className="flex h-5 shrink-0 items-center bg-[#eee] pl-[2px]">
          <span className="flex-1 text-[9px]">ヘルプを参照するには[F1]を押してください</span>
          <span className="flex h-[18px] w-[34px] items-center border-l-2 border-[#d9d9d9] pl-[6px]">1</span>
          <span className="flex h-[18px] w-[33px] items-center border-l-2 border-[#d9d9d9] pl-[5px]">1</span>
          <span className="flex h-[18px] w-4 items-end justify-end border-l border-[#d0d0d0] pr-[2px]"><Pic w={8} h={8}><path d="M17 2h4M10 10h4M17 10h4M2 18h4M10 18h4M17 18h4" stroke="#999" strokeWidth="4" /></Pic></span>
        </footer>
      </div>
    </div>
  );
}
